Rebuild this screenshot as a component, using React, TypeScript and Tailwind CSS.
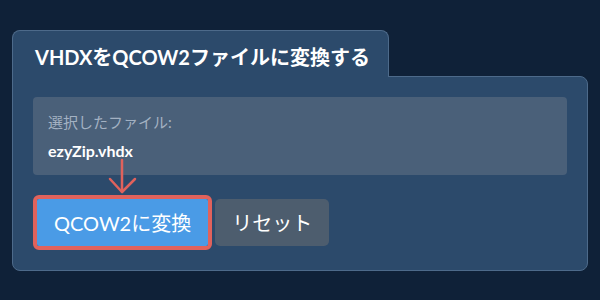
export default function App() {
  return (
    <div className="w-[600px] h-[300px] bg-[#0f2138] px-[12px] pt-[30px] font-['Lato','Noto_Sans_CJK_JP',sans-serif]">
      <div className="relative z-10 -mb-px w-[377px] h-[47px] rounded-t-[8px] border-x border-t border-[#4d6a8a] bg-[#2c4a6b] pl-[22px] pt-[12px]">
        <h1 className="text-[20px] leading-[28px] font-bold text-white">VHDXをQCOW2ファイルに変換する</h1>
      </div>
      <div className="relative w-[576px] rounded-b-[8px] rounded-tr-[8px] border border-[#4d6a8a] bg-[#2c4a6b] p-[20px]">
        <div className="rounded-[4px] bg-[#4a6079] px-[15px] pt-[15px] pb-[12px]">
          <p className="text-[15px] leading-[20px] text-[#a3b1c2]">選択したファイル:</p>
          <p className="mt-[7px] text-[16px] leading-[24px] font-bold text-white">ezyZip.vhdx</p>
        </div>
        <div className="mt-[20px] flex items-center">
          <div className="rounded-[6px] border-4 border-[#e0625c]">
            <button className="h-[47px] rounded-[2px] bg-[#4a9be6] px-[17px] text-[20px] text-white">QCOW2に変換</button>
          </div>
          <button className="ml-[3px] h-[47px] rounded-[5px] bg-[#4d5d6e] px-[17px] text-[20px] text-white">リセット</button>
        </div>
        <svg className="absolute left-[94px] top-[81px]" width="30" height="38" viewBox="0 0 30 38" fill="none" stroke="#e0625c" strokeWidth="2.5" strokeLinecap="round" strokeLinejoin="round">
          <line x1="15" y1="2" x2="15" y2="34" />
          <polyline points="3,21 15,34 28,21" />
        </svg>
      </div>
    </div>
  );
}
